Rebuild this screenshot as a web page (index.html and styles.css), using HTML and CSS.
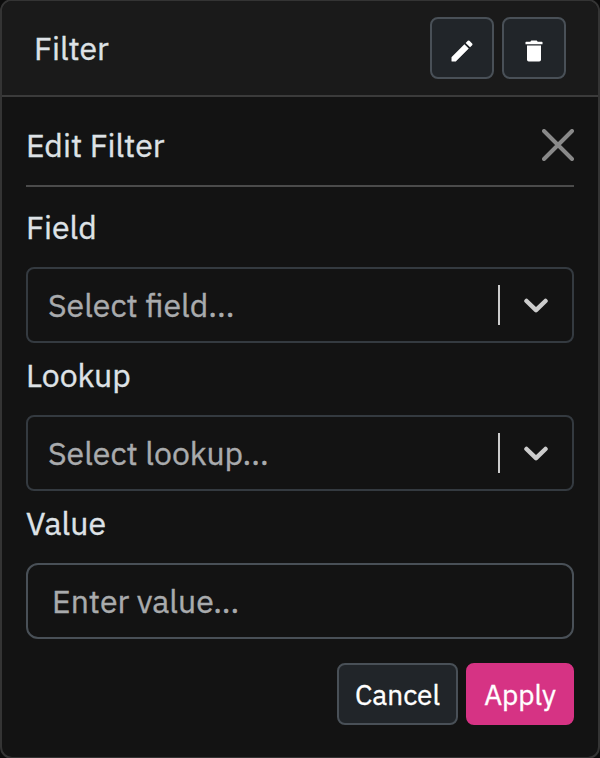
FILE: index.html
```
<!DOCTYPE html>
<html lang="en">
<head>
<meta charset="utf-8">
<title>Filter</title>
<link rel="stylesheet" href="styles.css">
</head>
<body>
<section class="card">
  <header class="card-header">
    <h1 class="card-title">Filter</h1>
    <div class="header-actions">
      <button class="btn icon-btn" type="button" aria-label="Edit">
        <svg class="icon" viewBox="0 0 24 24"><path d="M3 17.46v3.04c0 .28.22.5.5.5h3.04c.13 0 .26-.05.35-.15L17.81 9.94l-3.75-3.75L3.15 17.1c-.1.1-.15.22-.15.36zM20.71 7.04a1 1 0 0 0 0-1.410l-2.340-2.340a1 1 0 0 0-1.410 0l-1.830 1.830 3.750 3.750z"/></svg>
      </button>
      <button class="btn icon-btn" type="button" aria-label="Delete">
        <svg class="icon" viewBox="0 0 24 24"><path d="M6 7.200h12V19.500a1.500 1.500 0 0 1-1.500 1.500h-9A1.500 1.500 0 0 1 6 19.500zM5.200 4H8.800l.9-1h4.600l.9 1h3.600a.5.5 0 0 1 .5.5v1.700H4.700V4.500a.5.5 0 0 1 .5-.5z"/></svg>
      </button>
    </div>
  </header>
  <div class="card-body">
    <div class="form-heading">
      <h2 class="form-title">Edit Filter</h2>
      <svg class="close" viewBox="0 0 32 32"><path d="M2 2l28 28M30 2L2 30"/></svg>
    </div>
    <label class="label label-field">Field</label>
    <div class="select">
      <span class="placeholder">Select field...</span>
      <span class="separator"></span>
      <svg class="chevron" viewBox="0 0 24 16"><path d="M2.500 3l9.500 9.200L21.500 3"/></svg>
    </div>
    <label class="label label-lookup">Lookup</label>
    <div class="select">
      <span class="placeholder">Select lookup...</span>
      <span class="separator"></span>
      <svg class="chevron" viewBox="0 0 24 16"><path d="M2.500 3l9.500 9.200L21.500 3"/></svg>
    </div>
    <label class="label label-value" for="value">Value</label>
    <input class="input" id="value" type="text" placeholder="Enter value...">
    <div class="form-actions">
      <button class="btn cancel" type="button">Cancel</button>
      <button class="btn apply" type="button">Apply</button>
    </div>
  </div>
</section>
</body>
</html>
```
FILE: styles.css
```
* { box-sizing: border-box; }
html { height: 758px; overflow: hidden; background: #0c0c0c; }
body {
  margin: 0;
  height: 758px;
  overflow: hidden;
  font: 400 32px/48px "IBM Plex Sans", Roboto, sans-serif;
  -webkit-text-stroke: 0.35px currentColor;
  color: #dee2e6;
}
.card {
  height: 760px;
  margin-top: -1px;
  border: 2px solid #343434;
  border-radius: 12px;
  background: #131313;
  overflow: hidden;
}
.card-header {
  height: 96px;
  padding: 0 32px;
  display: flex;
  align-items: center;
  justify-content: space-between;
  background: #1a1a1a;
  border-bottom: 2px solid #3b3b3b;
}
h1, h2 { margin: 0; font: inherit; }
.header-actions { display: flex; gap: 8px; }
.btn {
  height: 62px;
  border: 2px solid #495057;
  border-radius: 8px;
  background: #212529;
  color: #fff;
  font: 400 28px/42px "IBM Plex Sans", Roboto, sans-serif;
  -webkit-text-stroke: 0.35px currentColor;
  padding: 2px 0 0;
}
.icon-btn { width: 64px; display: flex; align-items: center; justify-content: center; padding: 0; }
.icon { width: 28px; height: 28px; fill: currentColor; transform: translateY(3px); }
.card-body { padding: 24px; }
.form-heading {
  height: 66px;
  display: flex;
  justify-content: space-between;
  border-bottom: 2px solid #4b4b4b;
}
.close { width: 32px; height: 32px; margin-top: 8px; fill: none; stroke: #898989; stroke-width: 4; stroke-linecap: round; }
.label { display: block; height: 48px; }
.label-field { margin: 16px 0; }
.label-lookup, .label-value { margin: 8px 0 16px; }
.select {
  height: 76px;
  display: flex;
  align-items: center;
  border: 2px solid #343a40;
  border-radius: 8px;
  padding: 0 24px 0 20px;
}
.placeholder { flex: 1; color: #a9abad; }
.separator { width: 2px; height: 40px; background: #ccc; margin-right: 24px; }
.chevron { width: 24px; height: 16px; margin-top: 2px; fill: none; stroke: #ccc; stroke-width: 4.500; stroke-linecap: round; stroke-linejoin: round; }
.input {
  display: block;
  width: 100%;
  height: 76px;
  padding: 0 24px;
  border: 2px solid #495057;
  border-radius: 12px;
  background: transparent;
  font: inherit;
}
.input::placeholder { color: #a9abad; opacity: 1; -webkit-text-stroke: 0.35px #a9abad; }
.form-actions { display: flex; justify-content: flex-end; gap: 8px; margin-top: 24px; }
.cancel { width: 121px; }
.apply { width: 108px; background: #d63384; border-color: #d63384; }
```
